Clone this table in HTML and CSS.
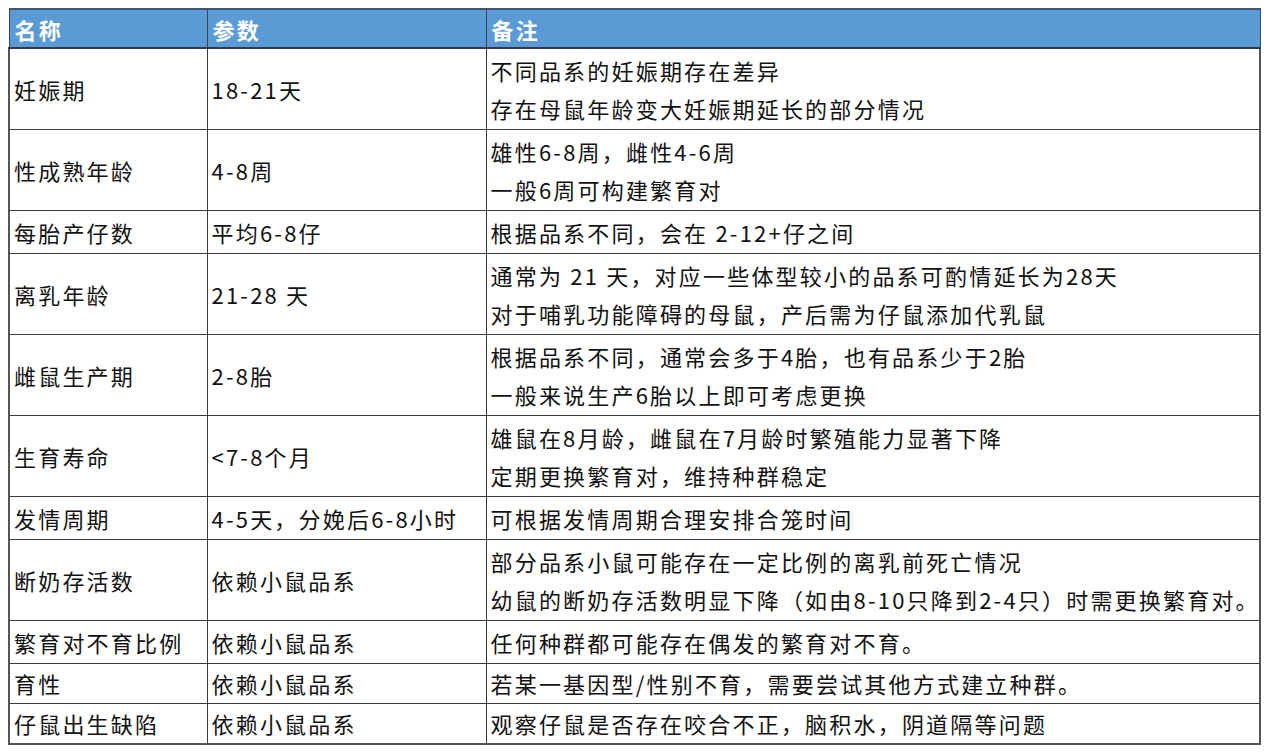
FILE: index.html
```html
<!DOCTYPE html>
<html lang="zh">
<head>
<meta charset="utf-8">
<link rel="stylesheet" href="styles.css">
</head>
<body>
<table class="grid">
  <colgroup><col class="c1"><col class="c2"><col class="c3"></colgroup>
  <thead>
    <tr><th>名称</th><th>参数</th><th>备注</th></tr>
  </thead>
  <tbody>
    <tr class="two"><td>妊娠期</td><td>18-21天</td><td><div>不同品系的妊娠期存在差异</div><div>存在母鼠年龄变大妊娠期延长的部分情况</div></td></tr>
    <tr class="two"><td>性成熟年龄</td><td>4-8周</td><td><div>雄性6-8周，雌性4-6周</div><div>一般6周可构建繁育对</div></td></tr>
    <tr><td>每胎产仔数</td><td>平均6-8仔</td><td>根据品系不同，会在 2-12+仔之间</td></tr>
    <tr class="two"><td>离乳年龄</td><td>21-28 天</td><td><div>通常为 21 天，对应一些体型较小的品系可酌情延长为28天</div><div>对于哺乳功能障碍的母鼠，产后需为仔鼠添加代乳鼠</div></td></tr>
    <tr class="two"><td>雌鼠生产期</td><td>2-8胎</td><td><div>根据品系不同，通常会多于4胎，也有品系少于2胎</div><div>一般来说生产6胎以上即可考虑更换</div></td></tr>
    <tr class="two"><td>生育寿命</td><td>&lt;7-8个月</td><td><div>雄鼠在8月龄，雌鼠在7月龄时繁殖能力显著下降</div><div>定期更换繁育对，维持种群稳定</div></td></tr>
    <tr><td>发情周期</td><td>4-5天，分娩后6-8小时</td><td>可根据发情周期合理安排合笼时间</td></tr>
    <tr class="two"><td>断奶存活数</td><td>依赖小鼠品系</td><td><div>部分品系小鼠可能存在一定比例的离乳前死亡情况</div><div>幼鼠的断奶存活数明显下降（如由8-10只降到2-4只）时需更换繁育对。</div></td></tr>
    <tr><td>繁育对不育比例</td><td>依赖小鼠品系</td><td>任何种群都可能存在偶发的繁育对不育。</td></tr>
    <tr class="short"><td>育性</td><td>依赖小鼠品系</td><td>若某一基因型/性别不育，需要尝试其他方式建立种群。</td></tr>
    <tr class="short"><td>仔鼠出生缺陷</td><td>依赖小鼠品系</td><td>观察仔鼠是否存在咬合不正，脑积水，阴道隔等问题</td></tr>
  </tbody>
</table>
</body>
</html>
```
FILE: styles.css
```css
html, body {
  margin: 0;
  padding: 0;
  background: #ffffff;
}
body {
  padding: 8px 0 0 8px;
  font-family: "Noto Sans CJK SC", "Noto Sans", sans-serif;
  color: #111111;
}
.grid {
  border-collapse: collapse;
  width: 1251px;
  table-layout: fixed;
  font-size: 22px;
  letter-spacing: 2.2px;
}
.c1 { width: 198px; }
.c2 { width: 279px; }
.c3 { width: 774px; }
.grid th {
  background: #5b9bd5;
  color: #ffffff;
  font-weight: 700;
  text-align: left;
  height: 37px;
  padding: 0 5px;
  line-height: 30px;
  border: 1px solid #3a4556;
  border-top: 2px solid #44546a;
  border-bottom: 2px solid #2f3b4c;
}
.grid td {
  border: 1px solid #3b3b3b;
  padding: 2px 4px;
  line-height: 38px;
  vertical-align: middle;
  white-space: nowrap;
}
.grid td:first-child { border-left: 2px solid #555; }
.grid td:last-child { border-right: 2px solid #555; }
.grid tr:last-child td { border-bottom: 2px solid #555; }
.grid tr.short td { line-height: 35px; }
```
